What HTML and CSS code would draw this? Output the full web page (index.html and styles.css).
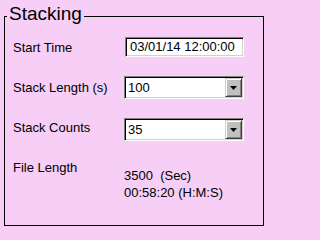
FILE: index.html
```html
<!DOCTYPE html>
<html>
<head>
<meta charset="utf-8">
<link rel="stylesheet" href="styles.css">
</head>
<body>
<div class="group">
  <div class="title">Stacking</div>
  <div class="grid">
    <div class="label l1">Start Time</div>
    <div class="textbox">03/01/14 12:00:00</div>

    <div class="label l2">Stack Length (s)</div>
    <div class="combo"><span class="value">100</span><span class="btn"><svg width="7" height="4" viewBox="0 0 7 4"><polygon points="0,0 7,0 3.5,4" fill="#000"/></svg></span></div>

    <div class="label l3">Stack Counts</div>
    <div class="combo"><span class="value">35</span><span class="btn"><svg width="7" height="4" viewBox="0 0 7 4"><polygon points="0,0 7,0 3.5,4" fill="#000"/></svg></span></div>

    <div class="label l4">File Length</div>
    <div class="values">
      <div class="line">3500&nbsp; (Sec)</div>
      <div class="line">00:58:20 (H:M:S)</div>
    </div>
  </div>
</div>
</body>
</html>
```
FILE: styles.css
```css
html, body {
  margin: 0;
  padding: 0;
  background: #f6cef6;
}
body {
  font-family: "Liberation Sans", Arial, sans-serif;
  font-size: 13px;
  color: #000;
  width: 268px;
  height: 231px;
  overflow: hidden;
}
.group {
  position: relative;
  margin: 16px 0 0 4px;
  width: 258px;
  height: 208px;
  border: 1px solid #000;
}
.title {
  position: absolute;
  left: 2px;
  top: -14px;
  padding: 0 2px 0 2px;
  background: #f6cef6;
  font-size: 19px;
  line-height: 22px;
}
.grid {
  display: grid;
  grid-template-columns: 111px 120px;
  grid-template-rows: 20px 23px 23px auto;
  row-gap: 19px;
  padding: 20px 0 0 8px;
  align-items: start;
}
.label {
  line-height: 17px;
  white-space: nowrap;
}
.l1 { margin-top: 2px; }
.l2 { margin-top: 3px; }
.l3 { margin-top: 1px; }
.l4 { margin-top: -1px; }
.textbox {
  margin-left: 1px;
  width: 119px;
  height: 20px;
  box-sizing: border-box;
  background: #fff;
  border-top: 1px solid #808080;
  border-left: 1px solid #808080;
  border-bottom: 1px solid #fff;
  border-right: 1px solid #fff;
  box-shadow: inset 1px 1px 0 #000, inset -1px -1px 0 #d4d0c8;
  padding: 0 0 0 4px;
  line-height: 18px;
  white-space: nowrap;
}
.combo {
  display: flex;
  align-items: center;
  width: 120px;
  height: 23px;
  box-sizing: border-box;
  background: #fff;
  border-top: 1px solid #808080;
  border-left: 1px solid #808080;
  border-bottom: 1px solid #fff;
  border-right: 1px solid #fff;
  box-shadow: inset 1px 1px 0 #000, inset -1px -1px 0 #d4d0c8;
  padding: 1px;
}
.value {
  flex: 1;
  padding-left: 2px;
  line-height: 19px;
}
.btn {
  display: flex;
  align-items: center;
  justify-content: center;
  width: 17px;
  height: 19px;
  box-sizing: border-box;
  background: #c0c0c0;
  border-top: 1px solid #d4d0c8;
  border-left: 1px solid #d4d0c8;
  border-bottom: 1px solid #404040;
  border-right: 1px solid #404040;
  box-shadow: inset 1px 1px 0 #fff, inset -1px -1px 0 #808080;
}
.btn svg {
  display: block;
  margin-top: 1px;
}
.values {
  margin-top: 7px;
}
.line {
  line-height: 17px;
  white-space: nowrap;
}
```
